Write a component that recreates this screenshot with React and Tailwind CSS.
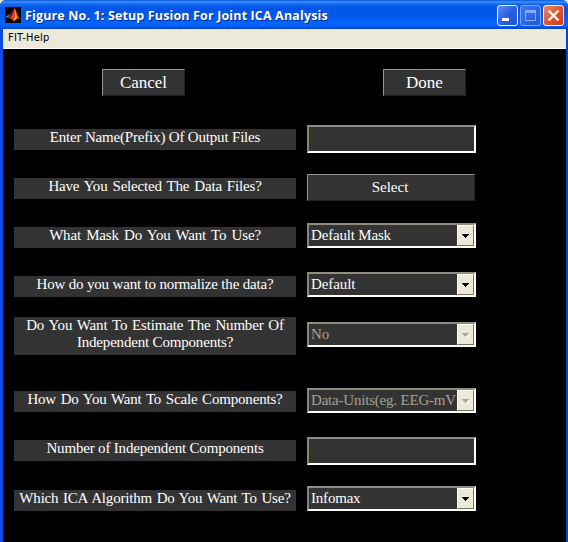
import { clsx } from "clsx";

const serif = "font-['Liberation_Serif','Times_New_Roman',serif]";
const sunken =
  "border-t-2 border-l-2 border-b-2 border-r-2 border-t-[#918d7f] border-l-[#8a8471] border-b-[#fffff6] border-r-[#fffff6]";

function MatlabLogo() {
  return (
    <svg className="h-4 w-4 shrink-0" viewBox="0 0 16 16">
      <rect width="16" height="16" fill="#050505" />
      <path d="M0.500 9.500 4.500 7.500 6.500 9 4 11.500Z" fill="#2b8f9c" />
      <path d="M4.500 7.500C7 6 8 3 9.500 1L8 8.500 4 11.500 3 10.500Z" fill="#7c1a14" />
      <path d="M9.500 1C11 2 12 8 15.500 12.500 13 10.500 11 12 8.500 15 8 12.500 6.500 11 4.500 11.500 7.500 9.500 8.500 4.500 9.500 1Z" fill="#e8401a" />
      <path d="M9.800 2.500C10.800 6 10.500 9 8.800 14L11.800 11C12.300 8.500 11 5 9.800 2.500Z" fill="#ffe23a" />
      <path d="M10.800 3.500C11.800 6 12.500 9 15.500 12.500 14 11.200 13 11 12 11.300Z" fill="#c52a16" />
    </svg>
  );
}

function WindowButton({ kind }) {
  return (
    <div
      className={clsx(
        "h-[21px] w-[21px] rounded-[3px] border",
        kind === "min" && "border-[#f2f6ff] bg-linear-to-br from-[#5f8ff5] via-[#2a5fe0] to-[#1b55dc]",
        kind === "max" && "border-[#7fa3f3] bg-linear-to-br from-[#3f78ee] to-[#1d55db]",
        kind === "close" && "border-[#fff3ee] bg-linear-to-br from-[#ee8a68] via-[#e0532c] to-[#cf3d12]"
      )}
    >
      <svg className="block h-[19px] w-[19px]" viewBox="0 0 19 19" shapeRendering={kind === "close" ? "auto" : "crispEdges"}>
        {kind === "min" && <rect x="4" y="12" width="7" height="3" fill="#fff" />}
        {kind === "max" && (
          <>
            <rect x="4.500" y="4.500" width="10" height="10" fill="none" stroke="#8ba9f2" />
            <rect x="4" y="4" width="11" height="3" fill="#8ba9f2" />
          </>
        )}
        {kind === "close" && <path d="M4.500 4.500 14.500 14.500M14.500 4.500 4.500 14.500" stroke="#fff" strokeWidth="2.400" fill="none" />}
      </svg>
    </div>
  );
}

function PushButton({ className, children }) {
  return (
    <button
      className={clsx(
        "block h-[27px] border border-t-[#949494] border-l-[#949494] border-r-[#222] border-b-[#222] bg-[#333] text-center text-white",
        className
      )}
    >
      {children}
    </button>
  );
}

function TextInput() {
  return <div className={clsx("h-7 w-[169px] bg-[#333]", sunken)} />;
}

function Dropdown({ value, disabled, track }) {
  return (
    <div className={clsx("flex h-[25px] w-[169px] bg-[#333]", sunken)}>
      <div
        className={clsx(
          "h-[21px] w-[148px] pl-[2px] text-[15px] leading-[20px] whitespace-nowrap",
          track,
          disabled ? "text-[#a5a294]" : "text-white"
        )}
      >
        {value}
      </div>
      <div className="flex h-[21px] w-[17px] items-center justify-center border border-t-[#fffff8] border-l-[#fffff8] border-r-[#77725f] border-b-[#77725f] bg-[#ece9d8]">
        <svg className="mt-[2px] h-[5px] w-[8px]" viewBox="0 0 8 5" shapeRendering="crispEdges">
          {disabled && <path d="M1 1H8V2H7V3H6V4H5V5H4V4H3V3H2V2H1Z" fill="#fff" />}
          <path d="M0 0H7V1H6V2H5V3H4V4H3V3H2V2H1V1H0Z" fill={disabled ? "#aca899" : "#000"} />
        </svg>
      </div>
    </div>
  );
}

const rows = [
  { lines: [["Enter Name(Prefix) Of Output Files", "[word-spacing:0px]"]], row: "mt-[29px]", label: "mt-1", control: <TextInput /> },
  {
    lines: [["Have You Selected The Data Files?", "[word-spacing:1.4px]"]],
    row: "mt-[21px]",
    label: "mt-1",
    control: <PushButton className="w-[168px] pr-[2px] text-[15px] leading-[25px]">Select</PushButton>,
  },
  { lines: [["What Mask Do You Want To Use?", "[word-spacing:1.7px]"]], row: "mt-[22px]", label: "mt-1", control: <Dropdown value="Default Mask" track="tracking-[-0.18px]" /> },
  { lines: [["How do you want to normalize the data?", "[word-spacing:0px]"]], row: "mt-6", label: "mt-1", control: <Dropdown value="Default" track="tracking-[-0.1px]" /> },
  {
    lines: [
      ["Do You Want To Estimate The Number Of", "[word-spacing:1.3px]"],
      ["Independent Components?", "[word-spacing:0px]"],
    ],
    row: "mt-5",
    tall: true,
    control: <Dropdown value="No" disabled />,
    offset: "mt-[5px]",
  },
  { lines: [["How Do You Want To Scale Components?", "[word-spacing:1.1px]"]], row: "mt-[33px]", label: "mt-[3px]", control: <Dropdown value="Data-Units(eg. EEG-mV" disabled track="tracking-[-0.2px]" /> },
  { lines: [["Number of Independent Components", "[word-spacing:0px]"]], row: "mt-6", label: "mt-[3px]", control: <TextInput /> },
  { lines: [["Which ICA Algorithm Do You Want To Use?", "[word-spacing:1px]"]], row: "mt-[21px]", label: "mt-1", control: <Dropdown value="Infomax" track="tracking-[-0.2px]" /> },
];

export default function App() {
  return (
    <div className="h-[542px] w-[568px] overflow-hidden bg-[#e8e6da]">
      <div className="flex h-full flex-col overflow-hidden rounded-t-[6px] bg-[#0a4bea]">
        <header className="flex h-[29px] shrink-0 items-start bg-[linear-gradient(to_bottom,#0a57dd_0px,#3c91fb_2px,#1069f2_4px,#0356e6_8px,#0458ea_16px,#0565fb_23px,#0462f6_26px,#0240c4_29px)] pl-[5px]">
          <div className="mt-[7px]">
            <MatlabLogo />
          </div>
          <h1 className="mt-[7px] ml-1 font-['Open_Sans',sans-serif] text-[12.5px] leading-[18px] font-bold tracking-[0.14px] whitespace-nowrap text-white [text-shadow:1px_1px_0_#0a2a90]">
            Figure No. 1: Setup Fusion For Joint ICA Analysis
          </h1>
          <div className="mt-[5px] mr-1 ml-auto flex gap-[2px]">
            <WindowButton kind="min" />
            <WindowButton kind="max" />
            <WindowButton kind="close" />
          </div>
        </header>
        <div className="flex min-h-0 flex-1 flex-col border-r-2 border-l-[3px] border-r-[#0a3fdc] border-l-[#0a4bea]">
          <nav className="h-5 shrink-0 border-b border-white bg-[#ece9d8] pl-[5px] font-['DejaVu_Sans_Condensed','DejaVu_Sans',sans-serif] text-[11px] leading-[18px] text-black">
            <span className="tracking-[0.2px]">FIT-Help</span>
          </nav>
          <main className={clsx("flex-1 bg-black pt-5", serif)}>
            <div className="flex gap-[198px] pl-[99px]">
              <PushButton className="w-[83px] text-[17px] leading-[25px]">Cancel</PushButton>
              <PushButton className="w-[83px] text-[17px] leading-[25px]">Done</PushButton>
            </div>
            {rows.map((r) => (
              <div key={r.lines[0][0]} className={clsx("flex items-start gap-[11px] pl-[11px]", r.row)}>
                <div
                  className={clsx(
                    "w-[282px] bg-[#333] text-center text-[15px] leading-[17px] tracking-[-0.18px] whitespace-nowrap text-white",
                    r.tall ? "h-[38px]" : "h-[21px]",
                    r.label
                  )}
                >
                  {r.lines.map(([text, spacing]) => (
                    <div key={text} className={spacing}>{text}</div>
                  ))}
                </div>
                <div className={r.offset}>{r.control}</div>
              </div>
            ))}
          </main>
        </div>
      </div>
    </div>
  );
}
